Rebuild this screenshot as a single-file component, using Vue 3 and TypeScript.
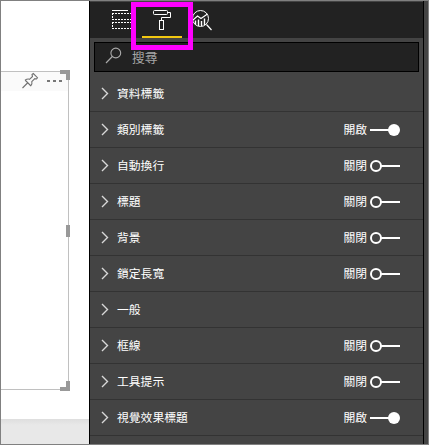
<script setup lang="ts">
interface FormatRow {
  label: string
  on?: boolean
}

const rows: FormatRow[] = [
  { label: '資料標籤' },
  { label: '類別標籤', on: true },
  { label: '自動換行', on: false },
  { label: '標題', on: false },
  { label: '背景', on: false },
  { label: '鎖定長寬', on: false },
  { label: '一般' },
  { label: '框線', on: false },
  { label: '工具提示', on: false },
  { label: '視覺效果標題', on: true },
]
</script>

<template>
  <div class="window">
    <section class="canvas">
      <div class="page">
        <div class="visual">
          <div class="visual-header">
            <svg class="pin" width="18" height="18" viewBox="0 0 18 18">
              <path d="M.5 16L5.500 11M3 8L9 14M3 8.300Q5.500 6.500 7.500 7.300L10.500 4.500L10 2.500L11.300 1.500L15.500 5.700L14.500 7L12.800 6.700L9.800 9.700Q10.500 11.700 8.700 14" />
            </svg>
            <span class="dots"><i /><i /><i /></span>
          </div>
          <span class="handle corner top" />
          <span class="handle side" />
          <span class="handle corner bottom" />
        </div>
      </div>
      <div class="desk" />
    </section>

    <aside class="panel">
      <nav class="tabs">
        <div class="tab fields">
          <svg width="22" height="22" viewBox="0 0 22 22" shape-rendering="crispEdges">
            <path d="M0 1.500H16" />
            <path d="M0 4.500H22M0 10.500H22M0 13.500H22M0 19.500H22" stroke-dasharray="2 1" />
            <path d="M.5 4V11M.5 13V20" stroke-dasharray="2 1" />
          </svg>
        </div>
        <div class="tab format">
          <svg width="20" height="22" viewBox="0 0 20 22">
            <rect x="1.500" y="1.500" width="14" height="4" rx="1" />
            <path d="M15.500 3.500H18.500V8.500H9.500V11.500" />
            <rect x="7.500" y="11.500" width="4" height="9" />
          </svg>
        </div>
        <div class="tab analytics">
          <svg width="22" height="22" viewBox="0 0 22 22">
            <circle cx="9.500" cy="9.500" r="8" />
            <path d="M15.500 15.500L20.500 21M2 11L6.500 7L10 9.500L16.500 5" stroke-width="1.200" />
            <path d="M4.500 11.500V15.500M7.500 10.500V17M10.500 12V17M13.500 9.500V16" stroke-width="1.400" />
          </svg>
        </div>
        <span class="highlight" />
      </nav>

      <div class="search">
        <svg width="18" height="18" viewBox="0 0 18 18">
          <circle cx="10.800" cy="6" r="4.900" />
          <path d="M7.300 9.500L1 16" />
        </svg>
        <span>搜尋</span>
      </div>

      <ul class="rows">
        <li v-for="row in rows" :key="row.label" class="row">
          <svg class="chevron" width="8" height="13" viewBox="0 0 8 13">
            <path d="M1 1L6.500 6.500L1 12" />
          </svg>
          <span class="label">{{ row.label }}</span>
          <template v-if="row.on !== undefined">
            <span class="state">{{ row.on ? '開啟' : '關閉' }}</span>
            <svg class="toggle" width="30" height="15" viewBox="0 0 30 15">
              <template v-if="row.on">
                <path d="M0 8H20" />
                <circle class="knob" cx="24" cy="8" r="6" />
              </template>
              <template v-else>
                <path d="M11 8H30" />
                <circle cx="6" cy="8" r="5" />
              </template>
            </svg>
          </template>
        </li>
      </ul>
    </aside>
    <div class="gutter" />
  </div>
</template>

<style>
body {
  overflow: hidden;
}
</style>

<style scoped>
.window {
  box-sizing: border-box;
  display: flex;
  width: 429px;
  height: 445px;
  border: 1px solid #808080;
  background: #444;
  font-family: "Liberation Sans", "Noto Sans CJK TC", sans-serif;
  overflow: hidden;
}

svg {
  display: block;
  flex: none;
  fill: none;
  stroke: #fff;
}

.canvas {
  display: flex;
  flex-direction: column;
  width: 88px;
  background: #fff;
}

.page {
  height: 418px;
  box-sizing: border-box;
  padding-top: 70px;
}

.desk {
  flex: 1;
  background: linear-gradient(#dedede, #e8e8e8 6px);
}

.visual {
  position: relative;
  box-sizing: border-box;
  width: 68px;
  height: 319px;
  border: 1px solid #c0c0c0;
  border-left: 0;
}

.visual-header {
  display: flex;
  gap: 7px;
  height: 19px;
  padding-left: 21px;
  background: #fafafa;
}

.pin {
  stroke: #707070;
  stroke-width: 1.1;
}

.dots {
  display: flex;
  gap: 3px;
  padding-top: 8px;
}

.dots i {
  width: 3px;
  height: 2px;
  background: #777;
}

.handle {
  position: absolute;
  box-sizing: border-box;
  right: -2px;
  border: 0 solid #999;
}

.corner {
  width: 10px;
  height: 10px;
  border-right-width: 4px;
}

.top {
  top: -2px;
  border-top-width: 4px;
}

.bottom {
  bottom: -2px;
  border-bottom-width: 4px;
}

.side {
  top: 153px;
  width: 4px;
  height: 12px;
  background: #999;
}

.panel {
  box-sizing: border-box;
  width: 335px;
  border: solid #000;
  border-width: 0 1px;
  background: #444;
}

.tabs {
  position: relative;
  box-sizing: border-box;
  display: flex;
  height: 37px;
  padding-left: 12px;
  border-top: 1px solid #444;
  background: #222;
}

.tab {
  box-sizing: border-box;
  display: flex;
  justify-content: center;
  width: 40px;
  padding-top: 7px;
}

.fields {
  justify-content: flex-start;
  padding-left: 10px;
}

.format {
  border-bottom: 2px solid #f2c811;
}

.highlight {
  position: absolute;
  z-index: 1;
  box-sizing: border-box;
  top: 0;
  left: 41px;
  width: 62px;
  height: 48px;
  border: 5px solid #f0f;
}

.search {
  box-sizing: border-box;
  display: flex;
  align-items: center;
  gap: 9px;
  height: 30px;
  margin: 4px;
  padding: 0 0 2px 10px;
  border: 1px solid #000;
  background: #222;
  color: #a6a6a6;
  font-size: 12.8px;
}

.search svg {
  stroke: #aaa;
  stroke-width: 1.1;
}

.rows {
  margin: 0;
  padding: 0;
  list-style: none;
}

.row {
  box-sizing: border-box;
  display: flex;
  align-items: center;
  height: 36px;
  padding: 0 23px 0 11px;
  border-bottom: 1px solid #333;
  color: #fff;
  font-size: 11.8px;
  line-height: 18px;
}

.chevron {
  stroke: #d8d8d8;
  stroke-width: 1.4;
}

.label {
  margin-left: 8px;
}

.state {
  margin-left: auto;
}

.toggle {
  margin-left: 3px;
  stroke-width: 2;
}

.knob {
  fill: #fff;
  stroke: none;
}

.gutter {
  flex: 1;
  background: #444;
}
</style>
